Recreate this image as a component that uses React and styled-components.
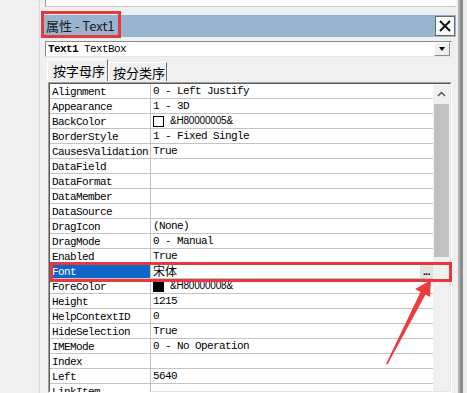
import React from "react";
import styled, { createGlobalStyle } from "styled-components";

const GlobalStyle = createGlobalStyle`
  html, body {
    margin: 0;
    padding: 0;
    background: #f0f0f0;
  }
`;

const Page = styled.div`
  position: relative;
  display: flex;
  height: 393px;
  overflow: hidden;
  background: #f0f0f0;
`;

const LeftStrip = styled.div`
  width: 39px;
  border-right: 1px solid #dcdcdc;
  background: #f0f0f0;
`;

const RightStrip = styled.div`
  flex: 1;
  border-left: 2px solid #b4b4b4;
  box-shadow: inset 3px 0 0 #8c8c8c;
  background: #ececec;
`;

const Window = styled.div`
  width: 416px;
  padding-left: 2px;
  display: flex;
  flex-direction: column;
  min-height: 0;
  background: #f0f0f0;
  & > * {
    flex-shrink: 0;
  }
`;

const TopBox = styled.div`
  margin-left: 3px;
  width: 410px;
  height: 6px;
  background: #fff;
  border-left: 1px solid #9a9a9a;
  border-bottom: 1px solid #c8c8c8;
`;

const TitleBar = styled.div`
  margin-top: 8px;
  height: 22px;
  width: 414px;
  background: #99b4d1;
  display: flex;
  align-items: center;
  justify-content: space-between;
`;

const TitleText = styled.span`
  padding-left: 4px;
  font-family: "Noto Sans CJK SC", "Liberation Sans", sans-serif;
  font-size: 13px;
  line-height: 20px;
  color: #1a1a1a;
`;

const CloseButton = styled.div`
  width: 18px;
  height: 18px;
  margin-right: 1px;
  background: #fafafa;
  border: 1px solid #6a6a6a;
  display: flex;
  align-items: center;
  justify-content: center;
`;

const Combo = styled.div`
  margin: 4px 0 0 3px;
  width: 407px;
  height: 16px;
  box-sizing: border-box;
  background: #fff;
  border: 1px solid;
  border-color: #8a8a8a #e6e6e6 #e6e6e6 #8a8a8a;
  display: flex;
  align-items: center;
  justify-content: space-between;
  font-family: "Liberation Mono", monospace;
  font-size: 11px;
  letter-spacing: -0.6px;
  color: #000;
`;

const ComboText = styled.span`
  padding-left: 2px;
  b {
    font-weight: bold;
  }
`;

const DropButton = styled.div`
  width: 14px;
  height: 12px;
  margin-right: 1px;
  background: #f0f0f0;
  border: 1px solid;
  border-color: #fff #8a8a8a #8a8a8a #fff;
  display: flex;
  align-items: center;
  justify-content: center;
`;

const TabRow = styled.div`
  margin-left: 5px;
  height: 25px;
  display: flex;
  align-items: flex-end;
`;

const Tab = styled.div`
  box-sizing: border-box;
  height: ${(p) => (p.$active ? "22px" : "19px")};
  padding: ${(p) => (p.$active ? "0 2px 0 5px" : "1px 1px 0 4px")};
  border-left: 1px solid #fff;
  border-top: 1px solid #fff;
  border-right: 1px solid #6e6e6e;
  display: flex;
  align-items: center;
  font-family: "Noto Sans CJK SC", sans-serif;
  font-size: 13px;
  line-height: 18px;
  color: #000;
  margin-bottom: 1px;
`;

const GridFrame = styled.div`
  margin-left: 6px;
  width: 404px;
  box-sizing: border-box;
  border: 1px solid;
  border-color: #a0a0a0 #fff #fff #a0a0a0;
  flex: 1 1 auto;
  min-height: 0;
  overflow: hidden;
`;

const GridInner = styled.div`
  height: 100%;
  box-sizing: border-box;
  border: 1px solid;
  border-color: #5a5a5a #e3e3e3 #e3e3e3 #5a5a5a;
  display: flex;
  background: #fff;
`;

const Table = styled.div`
  flex: 1;
  display: flex;
  flex-direction: column;
`;

const Row = styled.div`
  display: grid;
  grid-template-columns: 101px 1fr;
  height: 15px;
  flex-shrink: 0;
  box-sizing: border-box;
  border-bottom: 1px solid #c4c4c4;
  font-family: "Liberation Mono", monospace;
  font-size: 11px;
  letter-spacing: -0.6px;
  line-height: 16px;
  color: #000;
`;

const NameCell = styled.div`
  padding-left: 2px;
  border-right: 1px solid #c4c4c4;
  white-space: nowrap;
  overflow: hidden;
  background: ${(p) => (p.$selected ? "#0e66c8" : "#fff")};
  color: ${(p) => (p.$selected ? "#fff" : "#000")};
`;

const ValueCell = styled.div`
  padding-left: 2px;
  height: 14px;
  display: flex;
  align-items: center;
  white-space: nowrap;
  overflow: hidden;
`;

const Swatch = styled.span`
  box-sizing: border-box;
  width: 11px;
  height: 11px;
  margin-right: 6px;
  border: 1px solid #000;
  background: ${(p) => p.$color};
  flex-shrink: 0;
`;

const HexText = styled.span`
  font-family: "Liberation Sans", sans-serif;
  font-size: 10px;
  letter-spacing: -0.2px;
`;

const CjkText = styled.span`
  font-family: "Noto Sans CJK SC", sans-serif;
  font-size: 12px;
  line-height: 14px;
  letter-spacing: 0;
  flex: 1;
`;

const EllipsisButton = styled.span`
  width: 13px;
  height: 14px;
  background: #e2e2e2;
  border-left: 1px solid #fff;
  font-family: "Liberation Sans", sans-serif;
  font-weight: bold;
  font-size: 10px;
  letter-spacing: -0.5px;
  line-height: 15px;
  text-align: center;
  flex-shrink: 0;
`;

const Scrollbar = styled.div`
  width: 17px;
  display: flex;
  flex-direction: column;
  background: #f0f0f0;
`;

const ScrollArrow = styled.div`
  height: 20px;
  display: flex;
  align-items: center;
  justify-content: center;
  background: #f0f0f0;
`;

const ScrollThumb = styled.div`
  height: 153px;
  margin: 0 1px;
  background: #c1c1c1;
`;

const Highlight = styled.div`
  position: absolute;
  box-sizing: border-box;
  border: 3px solid #e8383d;
  pointer-events: none;
`;

const ArrowLayer = styled.svg`
  position: absolute;
  left: 0;
  top: 0;
  pointer-events: none;
`;

const rows = [
  ["Alignment", "0 - Left Justify"],
  ["Appearance", "1 - 3D"],
  ["BackColor", { color: "#fff", hex: "&H80000005&" }],
  ["BorderStyle", "1 - Fixed Single"],
  ["CausesValidation", "True"],
  ["DataField", ""],
  ["DataFormat", ""],
  ["DataMember", ""],
  ["DataSource", ""],
  ["DragIcon", "(None)"],
  ["DragMode", "0 - Manual"],
  ["Enabled", "True"],
  ["Font", { font: "宋体" }],
  ["ForeColor", { color: "#000", hex: "&H80000008&" }],
  ["Height", "1215"],
  ["HelpContextID", "0"],
  ["HideSelection", "True"],
  ["IMEMode", "0 - No Operation"],
  ["Index", ""],
  ["Left", "5640"],
  ["LinkItem", ""],
];

const renderValue = (v) => {
  if (typeof v === "string") return v;
  if (v.font)
    return (
      <>
        <CjkText>{v.font}</CjkText>
        <EllipsisButton>...</EllipsisButton>
      </>
    );
  return (
    <>
      <Swatch $color={v.color} />
      <HexText>{v.hex}</HexText>
    </>
  );
};

export default function App() {
  return (
    <>
      <GlobalStyle />
      <Page>
        <LeftStrip />
        <Window>
          <TopBox />
          <TitleBar>
            <TitleText>属性 - Text1</TitleText>
            <CloseButton>
              <svg width="14" height="14" viewBox="0 0 14 14">
                <path d="M2 2 L12 12 M12 2 L2 12" stroke="#111" strokeWidth="2" />
              </svg>
            </CloseButton>
          </TitleBar>
          <Combo>
            <ComboText>
              <b>Text1</b> TextBox
            </ComboText>
            <DropButton>
              <svg width="6" height="4" viewBox="0 0 6 4">
                <path d="M0 0 H6 L3 4 Z" fill="#000" />
              </svg>
            </DropButton>
          </Combo>
          <TabRow>
            <Tab $active>按字母序</Tab>
            <Tab>按分类序</Tab>
          </TabRow>
          <GridFrame>
            <GridInner>
              <Table>
                {rows.map(([name, value]) => (
                  <Row key={name}>
                    <NameCell $selected={name === "Font"}>{name}</NameCell>
                    <ValueCell>{renderValue(value)}</ValueCell>
                  </Row>
                ))}
              </Table>
              <Scrollbar>
                <ScrollArrow>
                  <svg width="9" height="6" viewBox="0 0 9 6">
                    <path d="M1 5 L4.5 1.5 L8 5" stroke="#555" strokeWidth="1.5" fill="none" />
                  </svg>
                </ScrollArrow>
                <ScrollThumb />
              </Scrollbar>
            </GridInner>
          </GridFrame>
        </Window>
        <RightStrip />
        <Highlight style={{ left: 41, top: 11, width: 80, height: 27 }} />
        <Highlight style={{ left: 50, top: 262, width: 402, height: 20 }} />
        <ArrowLayer width="467" height="393" viewBox="0 0 467 393">
          <polygon
            points="431,280 415,289 420.5,292 386,364 387.5,364.5 425.5,294.5 430,297"
            fill="#ef3b3f"
          />
        </ArrowLayer>
      </Page>
    </>
  );
}
